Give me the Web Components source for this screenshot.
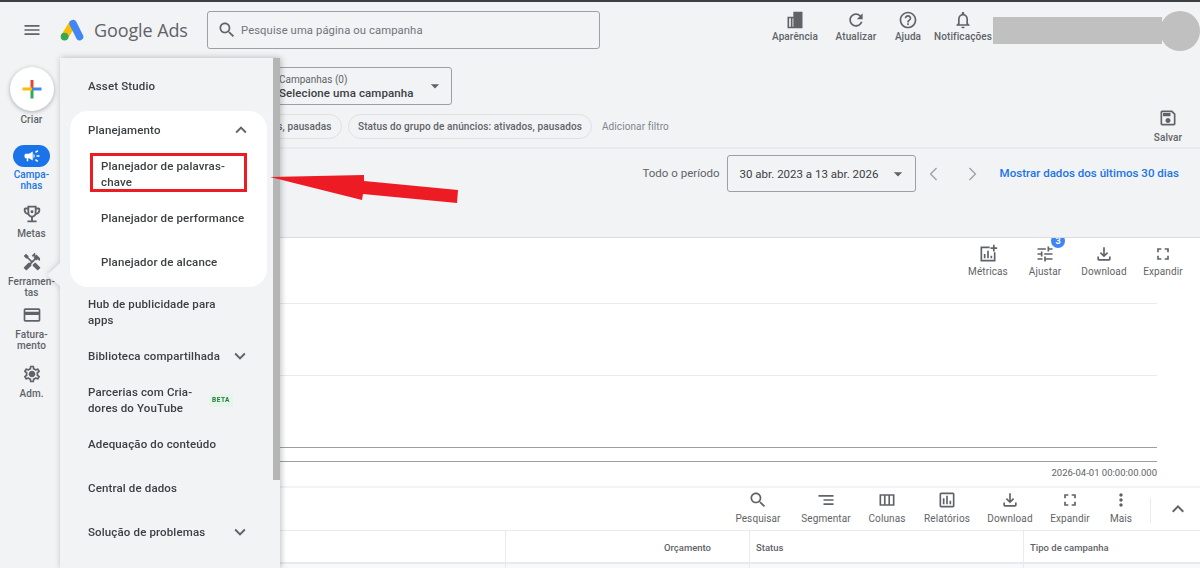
<!DOCTYPE html>
<html lang="pt-BR">
<head>
<meta charset="utf-8">
<title>Google Ads</title>
<style>
  html, body { margin: 0; height: 100%; }
  body { width: 1200px; height: 568px; overflow: hidden; background: #f1f3f5; font-family: Roboto, "Liberation Sans", sans-serif; color: #3c4043; }
</style>
</head>
<body>
<ads-app></ads-app>
<script>
const ICONS = {
  menu: '<path d="M3 18h18v-2H3v2zm0-5h18v-2H3v2zm0-7v2h18V6H3z"/>',
  search: '<path d="M15.5 14h-.79l-.28-.27C15.41 12.59 16 11.11 16 9.5 16 5.91 13.09 3 9.5 3S3 5.91 3 9.5 5.91 16 9.5 16c1.61 0 3.09-.59 4.23-1.57l.27.28v.79l5 4.99L20.49 19l-4.99-5zm-6 0C7.01 14 5 11.99 5 9.5S7.01 5 9.5 5 14 7.01 14 9.5 11.99 14 9.5 14z"/>',
  appearance: '<path fill-rule="evenodd" d="M10 2h11v20H3V8h7V2zM5 10v10h2V10H5zm4 0v10h1V10H9z"/>',
  refresh: '<path d="M17.65 6.35C16.2 4.9 14.21 4 12 4c-4.42 0-7.99 3.58-7.99 8s3.57 8 7.99 8c3.73 0 6.84-2.55 7.73-6h-2.08c-.82 2.33-3.04 4-5.65 4-3.31 0-6-2.69-6-6s2.69-6 6-6c1.66 0 3.14.69 4.22 1.78L13 11h7V4l-2.35 2.35z"/>',
  help: '<path d="M11 18h2v-2h-2v2zm1-16C6.48 2 2 6.48 2 12s4.48 10 10 10 10-4.48 10-10S17.52 2 12 2zm0 18c-4.41 0-8-3.59-8-8s3.59-8 8-8 8 3.59 8 8-3.59 8-8 8zm0-14c-2.21 0-4 1.79-4 4h2c0-1.1.9-2 2-2s2 .9 2 2c0 2-3 1.75-3 5h2c0-2.25 3-2.5 3-5 0-2.21-1.79-4-4-4z"/>',
  bell: '<path d="M12 22c1.1 0 2-.9 2-2h-4c0 1.1.9 2 2 2zm6-6v-5c0-3.07-1.63-5.64-4.5-6.32V4c0-.83-.67-1.5-1.5-1.5s-1.5.67-1.5 1.5v.68C7.64 5.36 6 7.92 6 11v5l-2 2v1h16v-1l-2-2zm-2 1H8v-6c0-2.48 1.51-4.5 4-4.5s4 2.02 4 4.5v6z"/>',
  save: '<path d="M17 3H5c-1.11 0-2 .9-2 2v14c0 1.1.89 2 2 2h14c1.1 0 2-.9 2-2V7l-4-4zm2 16H5V5h11.17L19 7.83V19zm-7-7c-1.66 0-3 1.34-3 3s1.34 3 3 3 3-1.34 3-3-1.34-3-3-3zM6 6h9v4H6z"/>',
  download: '<path d="M18 15v3H6v-3H4v3c0 1.1.9 2 2 2h12c1.1 0 2-.9 2-2v-3h-2zm-1-4l-1.41-1.41L13 12.17V4h-2v8.17L8.41 9.59 7 11l5 5 5-5z"/>',
  expand: '<path d="M7 14H5v5h5v-2H7v-3zm-2-4h2V7h3V5H5v5zm12 7h-3v2h5v-5h-2v3zM14 5v2h3v3h2V5h-5z"/>',
  tune: '<path d="M3 17v2h6v-2H3zM3 5v2h10V5H3zm10 16v-2h8v-2h-8v-2h-2v6h2zM7 9v2H3v2h4v2h2V9H7zm14 4v-2H11v2h10zm-6-4h2V7h4V5h-4V3h-2v6z"/>',
  metrics: '<path d="M14 3v2H5v14h14v-9h2v11H3V3h11zM7 12h2v5H7v-5zm4-4h2v9h-2V8zm4 6h2v3h-2v-3zM18 1h2v3h3v2h-3v3h-2V6h-3V4h3V1z"/>',
  segment: '<path d="M9 18h12v-2H9v2zM3 6v2h18V6H3zm6 7h12v-2H9v2z"/>',
  columns: '<path d="M3 5v14h18V5H3zm5.33 12H5V7h3.33v10zm5.34 0h-3.33V7h3.33v10zM19 17h-3.33V7H19v10z"/>',
  reports: '<path d="M19 3H5c-1.1 0-2 .9-2 2v14c0 1.1.9 2 2 2h14c1.1 0 2-.9 2-2V5c0-1.1-.9-2-2-2zm0 16H5V5h14v14zM7 10h2v7H7zm4-3h2v10h-2zm4 6h2v4h-2z"/>',
  more: '<path d="M12 8c1.1 0 2-.9 2-2s-.9-2-2-2-2 .9-2 2 .9 2 2 2zm0 2c-1.1 0-2 .9-2 2s.9 2 2 2 2-.9 2-2-.9-2-2-2zm0 6c-1.1 0-2 .9-2 2s.9 2 2 2 2-.9 2-2-.9-2-2-2z"/>',
  up: '<path d="M12 8l-6 6 1.41 1.41L12 10.83l4.59 4.58L18 14z"/>',
  down: '<path d="M16.59 8.59L12 13.17 7.41 8.59 6 10l6 6 6-6z"/>',
  caret: '<path d="M7 10l5 5 5-5z"/>',
  left: '<path d="M15.6 5.4L9 12l6.6 6.6-1.1 1.1L6.8 12l7.7-7.7z"/>',
  right: '<path d="M8.4 5.4L15 12l-6.6 6.6 1.1 1.1 7.7-7.7-7.7-7.7z"/>',
  campaign: '<path d="M18 11v2h4v-2h-4zm-2 6.61c.96.71 2.21 1.65 3.2 2.39.4-.53.8-1.07 1.2-1.6-.99-.74-2.24-1.68-3.2-2.4-.4.54-.8 1.08-1.2 1.61zM20.4 5.6c-.4-.53-.8-1.07-1.2-1.6-.99.74-2.24 1.68-3.2 2.4.4.53.8 1.07 1.2 1.6.96-.72 2.21-1.65 3.2-2.4zM4 9c-1.1 0-2 .9-2 2v2c0 1.1.9 2 2 2h1v4h2v-4h1l5 3V6L8 9H4zm11.5 3c0-1.33-.58-2.53-1.5-3.35v6.69c.92-.81 1.5-2.01 1.5-3.34z"/>',
  trophy: '<path d="M19 5h-2V3H7v2H5c-1.1 0-2 .9-2 2v1c0 2.55 1.92 4.63 4.39 4.94.63 1.5 1.98 2.63 3.61 2.96V19H7v2h10v-2h-4v-3.1c1.63-.33 2.98-1.46 3.61-2.96C19.08 12.63 21 10.55 21 8V7c0-1.1-.9-2-2-2zM5 8V7h2v3.82C5.84 10.4 5 9.3 5 8zm7 6c-1.65 0-3-1.35-3-3V5h6v6c0 1.65-1.35 3-3 3zm7-6c0 1.3-.84 2.4-2 2.82V7h2v1z"/><circle cx="12" cy="9.5" r="1.6"/>',
  tools: '<path d="M21.67 18.17l-5.3-5.3h-.99l-2.54 2.54v.99l5.3 5.3c.39.39 1.02.39 1.41 0l2.12-2.12c.39-.38.39-1.02 0-1.41zM17.34 10.19l1.41-1.41 2.12 2.12c1.17-1.17 1.17-3.07 0-4.24l-3.54-3.54-1.41 1.41V1.71l-.7-.71-3.54 3.54.71.71h2.83l-1.41 1.41 1.06 1.06-2.89 2.89-4.13-4.13V5.06L4.83 2.04 2 4.87 5.03 7.9h1.41l4.13 4.13-.85.85H7.71l-5.3 5.3c-.39.39-.39 1.02 0 1.41l2.12 2.12c.39.39 1.02.39 1.41 0l5.3-5.3v-2.01l5.15-5.15 1.06 1.06z"/>',
  card: '<path d="M20 4H4c-1.11 0-1.99.89-1.99 2L2 18c0 1.11.89 2 2 2h16c1.11 0 2-.89 2-2V6c0-1.11-.89-2-2-2zm0 14H4v-6h16v6zm0-10H4V6h16v2z"/>',
  settings: '<path d="M19.43 12.98c.04-.32.07-.64.07-.98 0-.34-.03-.66-.07-.98l2.11-1.65c.19-.15.24-.42.12-.64l-2-3.46c-.09-.16-.26-.25-.44-.25-.06 0-.12.01-.17.03l-2.49 1c-.52-.4-1.08-.73-1.69-.98l-.38-2.65C14.46 2.18 14.25 2 14 2h-4c-.25 0-.46.18-.49.42l-.38 2.65c-.61.25-1.17.59-1.69.98l-2.49-1c-.06-.02-.12-.03-.18-.03-.17 0-.34.09-.43.25l-2 3.46c-.13.22-.07.49.12.64l2.11 1.65c-.04.32-.07.65-.07.98 0 .33.03.66.07.98l-2.11 1.65c-.19.15-.24.42-.12.64l2 3.46c.09.16.26.25.44.25.06 0 .12-.01.17-.03l2.49-1c.52.4 1.08.73 1.69.98l.38 2.65c.03.24.24.42.49.42h4c.25 0 .46-.18.49-.42l.38-2.65c.61-.25 1.17-.59 1.69-.98l2.49 1c.06.02.12.03.18.03.17 0 .34-.09.43-.25l2-3.46c.12-.22.07-.49-.12-.64l-2.11-1.65zm-1.98-1.71c.04.31.05.52.05.73 0 .21-.02.43-.05.73l-.14 1.13.89.7 1.08.84-.7 1.21-1.27-.51-1.04-.42-.9.68c-.43.32-.84.56-1.25.73l-1.06.43-.16 1.13-.2 1.35h-1.4l-.19-1.35-.16-1.13-1.06-.43c-.43-.18-.83-.41-1.23-.71l-.91-.7-1.06.43-1.27.51-.7-1.21 1.08-.84.89-.7-.14-1.13c-.03-.31-.05-.54-.05-.74s.02-.43.05-.73l.14-1.13-.89-.7-1.08-.84.7-1.21 1.27.51 1.04.42.9-.68c.43-.32.84-.56 1.25-.73l1.06-.43.16-1.13.2-1.35h1.39l.19 1.35.16 1.13 1.06.43c.43.18.83.41 1.23.71l.91.7 1.06-.43 1.27-.51.7 1.21-1.07.85-.89.7.14 1.13zM12 8c-2.21 0-4 1.79-4 4s1.79 4 4 4 4-1.79 4-4-1.79-4-4-4z"/>'
};

class AdsIcon extends HTMLElement {
  connectedCallback() {
    const size = this.getAttribute('size') || 24;
    const name = this.getAttribute('name');
    const root = this.shadowRoot || this.attachShadow({ mode: 'open' });
    root.innerHTML = `<style>
      :host { display: block; width: ${size}px; height: ${size}px; color: var(--icon-color, #5f6368); flex: none; }
      svg { display: block; width: 100%; height: 100%; fill: currentColor; }
    </style><svg viewBox="0 0 24 24">${ICONS[name] || ''}</svg>`;
  }
}
customElements.define('ads-icon', AdsIcon);

// icon with a small caption under it, used by all the toolbars
class AdsTool extends HTMLElement {
  connectedCallback() {
    const root = this.attachShadow({ mode: 'open' });
    const width = this.getAttribute('width');
    root.innerHTML = `<style>
      :host { display: flex; flex-direction: column; align-items: center; width: ${width}px; flex: none; position: relative; }
      .label { font-size: var(--tool-font, 10px); font-weight: var(--tool-weight, 500); letter-spacing: .1px; line-height: 12px; margin-top: var(--tool-gap, 2px); color: var(--tool-color, #5f6368); white-space: nowrap; }
      .badge { position: absolute; top: -10px; left: 50%; margin-left: 6px; width: 14px; height: 14px; border-radius: 50%; background: #4285f4; color: #fff; font-size: 9px; font-weight: 700; line-height: 15px; text-align: center; }
    </style>
    <ads-icon name="${this.getAttribute('icon')}" size="${this.getAttribute('size') || 20}"></ads-icon>
    <div class="label"><slot></slot></div>
    ${this.hasAttribute('badge') ? `<div class="badge">${this.getAttribute('badge')}</div>` : ''}`;
  }
}
customElements.define('ads-tool', AdsTool);

class AdsTopbar extends HTMLElement {
  constructor() {
    super();
    this.attachShadow({ mode: 'open' }).innerHTML = `<style>
      :host { display: flex; align-items: center; height: 56px; border-top: 2px solid #3c4043; box-sizing: content-box; }
      .burger { margin-left: 22px; }
      .logo { display: block; width: 24px; height: 22px; margin-left: 18px; }
      .name { margin-left: 10px; width: 113px; font-family: "Open Sans", Roboto, sans-serif; font-size: 18px; color: #5f6368; letter-spacing: -.1px; white-space: nowrap; }
      .search { display: flex; align-items: center; width: 393px; height: 38px; box-sizing: border-box; border: 1px solid #9aa0a6; border-radius: 3px; padding-left: 9px; font-size: 11.25px; letter-spacing: .1px; color: #70757a; }
      .search span { margin-left: 4px; }
      .tools { display: flex; margin-left: 161px; margin-top: -8px; --tool-gap: 1px; --tool-font: 10px; }
      .blank { width: 169px; height: 27px; background: #c0c0c0; margin-top: 1px; }
      .avatar { width: 40px; height: 40px; border-radius: 50%; background: #c0c0c0; margin-left: -2px; margin-top: 1px; }
    </style>
    <ads-icon class="burger" name="menu" size="20"></ads-icon>
    <svg class="logo" viewBox="0 0 24 22">
      <path d="M13 4 5 17" stroke="#fbbc04" stroke-width="7.4" fill="none"/>
      <path d="M13 4.5 19.6 17.6" stroke="#4285f4" stroke-width="7.4" stroke-linecap="round" fill="none"/>
      <circle cx="4.6" cy="17.6" r="3.9" fill="#34a853"/>
    </svg>
    <div class="name">Google Ads</div>
    <div class="search"><ads-icon name="search" size="20"></ads-icon><span>Pesquise uma página ou campanha</span></div>
    <div class="tools">
      <ads-tool icon="appearance" width="68">Aparência</ads-tool>
      <ads-tool icon="refresh" width="54">Atualizar</ads-tool>
      <ads-tool icon="help" width="50">Ajuda</ads-tool>
      <ads-tool icon="bell" width="60">Notificações</ads-tool>
    </div>
    <div class="blank"></div>
    <div class="avatar"></div>`;
  }
}
customElements.define('ads-topbar', AdsTopbar);

class AdsRailItem extends HTMLElement {
  connectedCallback() {
    const active = this.hasAttribute('active');
    const size = active ? 18 : (this.getAttribute('size') || 20);
    this.attachShadow({ mode: 'open' }).innerHTML = `<style>
      :host { display: flex; flex-direction: column; align-items: center; width: 63px; }
      .pill { display: flex; justify-content: center; align-items: center; width: ${active ? 37 : 24}px; height: ${active ? 22 : 24}px; border-radius: 11px; background: ${active ? '#1a73e8' : 'none'}; --icon-color: ${active ? '#fff' : '#5f6368'}; }
      .label { margin-top: 2px; font-size: 10px; font-weight: 500; line-height: 11px; letter-spacing: .1px; text-align: center; white-space: nowrap; color: ${active ? '#1a73e8' : '#5f6368'}; }
    </style>
    <div class="pill"><ads-icon name="${this.getAttribute('icon')}" size="${size}"></ads-icon></div>
    <div class="label"><slot></slot></div>`;
  }
}
customElements.define('ads-rail-item', AdsRailItem);

class AdsRail extends HTMLElement {
  constructor() {
    super();
    this.attachShadow({ mode: 'open' }).innerHTML = `<style>
      :host { display: flex; flex-direction: column; align-items: center; width: 63px; height: 510px; padding-top: 9px; box-sizing: border-box; position: relative; z-index: 3; margin-right: -3px; }
      .create { width: 44px; height: 44px; border-radius: 50%; background: #fff; box-shadow: 0 1px 4px rgba(60,64,67,.4); display: block; }
      .create-label { margin: 2.5px 0 20px; font-size: 10px; font-weight: 500; line-height: 11px; letter-spacing: .1px; color: #5f6368; }
    </style>
    <svg class="create" viewBox="0 0 44 44">
      <path d="M22 21V13" stroke="#ea4335" stroke-width="3"/>
      <path d="M22 20.5h9.5" stroke="#4285f4" stroke-width="3" transform="translate(0 1.5)"/>
      <path d="M22 22v9.5" stroke="#34a853" stroke-width="3"/>
      <path d="M12.5 22H22" stroke="#fbbc04" stroke-width="3"/>
    </svg>
    <div class="create-label">Criar</div>
    <ads-rail-item icon="campaign" active style="margin-bottom:11px">Campa-<br>nhas</ads-rail-item>
    <ads-rail-item icon="trophy" size="22" style="margin-bottom:11.5px">Metas</ads-rail-item>
    <ads-rail-item icon="tools" style="margin-bottom:5px">Ferramen-<br>tas</ads-rail-item>
    <ads-rail-item icon="card" style="margin-bottom:11px">Fatura-<br>mento</ads-rail-item>
    <ads-rail-item icon="settings">Adm.</ads-rail-item>`;
  }
}
customElements.define('ads-rail', AdsRail);

class AdsNavRow extends HTMLElement {
  connectedCallback() {
    const chev = this.getAttribute('chevron');
    const beta = this.hasAttribute('beta');
    this.attachShadow({ mode: 'open' }).innerHTML = `<style>
      :host { display: flex; align-items: center; height: 44px; padding-left: 28px; padding-right: 28px; box-sizing: border-box; font-size: 11.5px; font-weight: 500; line-height: 16px; letter-spacing: .14px; color: #3c4043; }
      :host([sub]) { padding-left: 31px; padding-right: 8px; }
      :host([head]) { height: 38px; margin-bottom: 3px; padding-left: 18px; padding-right: 15px; }
      .text { flex: 1; white-space: nowrap; }
      .beta { margin-right: 19px; width: 24px; height: 13px; background: #e6f4ea; border-radius: 3px; color: #188038; font-size: 6.5px; font-weight: 700; line-height: 13px; letter-spacing: .5px; text-align: center; }
    </style>
    <div class="text"><slot></slot></div>
    ${beta ? '<div class="beta">BETA</div>' : ''}
    ${chev ? `<ads-icon name="${chev}" size="22"></ads-icon>` : ''}`;
  }
}
customElements.define('ads-nav-row', AdsNavRow);

class AdsNavGroup extends HTMLElement {
  constructor() {
    super();
    this.attachShadow({ mode: 'open' }).innerHTML = `<style>
      :host { display: block; margin: 3px 13px 3px 10px; padding-bottom: 3px; background: #fff; border-radius: 18px; }
    </style><slot></slot>`;
  }
}
customElements.define('ads-nav-group', AdsNavGroup);

class AdsFlyout extends HTMLElement {
  constructor() {
    super();
    this.attachShadow({ mode: 'open' }).innerHTML = `<style>
      :host { display: block; position: absolute; left: 60px; top: 58px; bottom: 0; width: 220px; z-index: 2; filter: drop-shadow(1px 0 3px rgba(60,64,67,.35)); }
      .panel { height: 100%; box-sizing: border-box; padding-top: 6px; background: #f1f3f5; overflow: hidden; }
      .notch { position: absolute; left: -13px; top: 204px; width: 14px; height: 25px; background: #f1f3f5; clip-path: polygon(100% 0, 0 52%, 100% 100%); }
      .thumb { position: absolute; right: 0; top: 0; width: 7px; height: 422px; background: #b5b5b5; }
    </style>
    <div class="notch"></div>
    <div class="panel"><slot></slot></div>
    <div class="thumb"></div>`;
  }
}
customElements.define('ads-flyout', AdsFlyout);

class AdsFilters extends HTMLElement {
  constructor() {
    super();
    this.attachShadow({ mode: 'open' }).innerHTML = `<style>
      :host { display: block; height: 91px; box-sizing: border-box; padding: 9px 0 0 208px; border-bottom: 2px solid #e8eaed; position: relative; }
      .select { display: flex; align-items: center; width: 184px; height: 38px; box-sizing: border-box; padding: 0 6px 0 10px; border: 1px solid #9aa0a6; border-radius: 3px; }
      .select .t { flex: 1; }
      .small { font-size: 10px; line-height: 13px; color: #5f6368; letter-spacing: 0; }
      .value { font-size: 11.5px; line-height: 14px; font-weight: 500; color: #3c4043; letter-spacing: .1px; white-space: nowrap; }
      .chips { display: flex; align-items: center; margin-top: 9px; font-size: 10px; font-weight: 500; letter-spacing: .1px; color: #5f6368; height: 25px; }
      .chip { height: 25px; box-sizing: border-box; border: 1px solid #dfe1e5; border-radius: 13px; padding: 0 9.5px; display: flex; align-items: center; white-space: nowrap; }
      .first { width: 80px; justify-content: flex-end; margin-left: -6px; margin-right: 5.5px; }
      .add { margin-left: 9.5px; font-weight: 400; color: #80868b; letter-spacing: .1px; }
      .save { position: absolute; right: 8px; top: 50px; --tool-font: 10px; --tool-gap: 4px; }
    </style>
    <div class="select">
      <div class="t"><div class="small">Campanhas (0)</div><div class="value">Selecione uma campanha</div></div>
      <ads-icon name="caret" size="20"></ads-icon>
    </div>
    <div class="chips">
      <div class="chip first">s, pausadas</div>
      <div class="chip">Status do grupo de anúncios: ativados, pausados</div>
      <div class="add">Adicionar filtro</div>
    </div>
    <ads-tool class="save" icon="save" width="48">Salvar</ads-tool>`;
  }
}
customElements.define('ads-filters', AdsFilters);

class AdsDateRow extends HTMLElement {
  constructor() {
    super();
    this.attachShadow({ mode: 'open' }).innerHTML = `<style>
      :host { display: flex; align-items: flex-start; justify-content: flex-end; height: 88px; box-sizing: border-box; padding: 6px 21px 0 0; font-size: 11.5px; letter-spacing: 0; color: #5f6368; }
      .period { margin: 0 7px 0 0; line-height: 37px; }
      .box { display: flex; align-items: center; width: 189px; height: 37px; box-sizing: border-box; padding: 0 7px 0 12px; border: 1px solid #9aa0a6; border-radius: 3px; color: #3c4043; }
      .box span { flex: 1; }
      .nav { display: flex; align-items: center; height: 37px; margin-left: 8px; --icon-color: #9aa0a6; }
      .nav ads-icon + ads-icon { margin-left: 18px; }
      .link { margin-left: 18px; line-height: 37px; font-weight: 500; color: #1a73e8; white-space: nowrap; letter-spacing: .03px; }
    </style>
    <div class="period">Todo o período</div>
    <div class="box"><span>30 abr. 2023 a 13 abr. 2026</span><ads-icon name="caret" size="20"></ads-icon></div>
    <div class="nav"><ads-icon name="left" size="20"></ads-icon><ads-icon name="right" size="20"></ads-icon></div>
    <div class="link">Mostrar dados dos últimos 30 dias</div>`;
  }
}
customElements.define('ads-date-row', AdsDateRow);

class AdsChart extends HTMLElement {
  constructor() {
    super();
    this.attachShadow({ mode: 'open' }).innerHTML = `<style>
      :host { display: block; height: 248px; box-sizing: content-box; background: #fff; border-top: 1px solid #dadce0; overflow: hidden; }
      .tools { display: flex; justify-content: flex-end; height: 65px; box-sizing: border-box; padding: 6px 7px 0 0; --tool-gap: 2px; --tool-font: 10px; --tool-weight: 400; }
      .plot { margin-right: 43px; }
      .line { height: 1px; background: #e8eaed; }
      .gap { height: 71px; }
      .axis { background: #9aa0a6; }
      .short { height: 13px; }
      .stamp { margin-top: 5px; text-align: right; font-size: 9.5px; line-height: 12px; letter-spacing: 0; color: #5f6368; }
    </style>
    <div class="tools">
      <ads-tool icon="metrics" width="54">Métricas</ads-tool>
      <ads-tool icon="tune" width="60" badge="3">Ajustar</ads-tool>
      <ads-tool icon="download" width="58">Download</ads-tool>
      <ads-tool icon="expand" width="60">Expandir</ads-tool>
    </div>
    <div class="plot">
      <div class="line"></div><div class="gap"></div>
      <div class="line"></div><div class="gap"></div>
      <div class="line axis"></div><div class="short"></div>
      <div class="line axis"></div>
      <div class="stamp">2026-04-01 00:00:00.000</div>
    </div>`;
  }
}
customElements.define('ads-chart', AdsChart);

class AdsTable extends HTMLElement {
  constructor() {
    super();
    this.attachShadow({ mode: 'open' }).innerHTML = `<style>
      :host { display: block; background: #fff; border-top: 2px solid #f1f3f5; }
      .tools { display: flex; justify-content: flex-end; align-items: flex-start; height: 42px; box-sizing: border-box; padding-top: 2px; --tool-gap: 3px; --tool-font: 10px; --tool-weight: 400; }
      .div { width: 1px; height: 25px; margin: 8px 0 0 8px; background: #e8eaed; }
      .collapse { margin: 7px 10px 0 15px; }
      .head, .row { display: grid; grid-template-columns: 445px 244px 274px 177px; }
      .head { height: 31px; border-top: 1px solid #e8eaed; border-bottom: 2px solid #e8eaed; box-sizing: content-box; font-size: 9.5px; font-weight: 500; letter-spacing: 0; color: #5f6368; }
      .head div, .row div { border-left: 1px solid #e8eaed; line-height: 33px; padding: 0 6px; box-sizing: border-box; }
      .head div:first-child, .row div:first-child { border-left: 0; }
      .num { text-align: right; padding-right: 38px !important; }
      .row { height: 20px; background: #f8f9fa; }
    </style>
    <div class="tools">
      <ads-tool icon="search" width="68">Pesquisar</ads-tool>
      <ads-tool icon="segment" width="68">Segmentar</ads-tool>
      <ads-tool icon="columns" width="54">Colunas</ads-tool>
      <ads-tool icon="reports" width="66">Relatórios</ads-tool>
      <ads-tool icon="download" width="60">Download</ads-tool>
      <ads-tool icon="expand" width="60">Expandir</ads-tool>
      <ads-tool icon="more" width="42">Mais</ads-tool>
      <div class="div"></div>
      <ads-icon class="collapse" name="up" size="24"></ads-icon>
    </div>
    <div class="head"><div></div><div class="num">Orçamento</div><div>Status</div><div>Tipo de campanha</div></div>
    <div class="row"><div></div><div></div><div></div><div></div></div>`;
  }
}
customElements.define('ads-table', AdsTable);

// the red box and the arrow somebody drew on top of the screenshot
class AdsMarkup extends HTMLElement {
  constructor() {
    super();
    this.attachShadow({ mode: 'open' }).innerHTML = `<style>
      :host { position: absolute; left: 0; top: 0; width: 1200px; height: 568px; z-index: 5; pointer-events: none; }
      svg { display: block; }
    </style>
    <svg width="1200" height="568" viewBox="0 0 1200 568">
      <rect x="91.5" y="154.5" width="154" height="36" fill="none" stroke="#ed1c24" stroke-width="3"/>
      <path d="M270 177 364 175 364 181 458 190 457 203 363 194 362 200z" fill="#ed1c24"/>
    </svg>`;
  }
}
customElements.define('ads-markup', AdsMarkup);

class AdsApp extends HTMLElement {
  constructor() {
    super();
    this.attachShadow({ mode: 'open' }).innerHTML = `<style>
      :host { display: block; position: relative; width: 1200px; height: 568px; overflow: hidden; }
      .body { display: flex; align-items: flex-start; }
      main { flex: 1; min-width: 0; }
    </style>
    <ads-topbar></ads-topbar>
    <div class="body">
      <ads-rail></ads-rail>
      <main>
        <ads-filters></ads-filters>
        <ads-date-row></ads-date-row>
        <ads-chart></ads-chart>
        <ads-table></ads-table>
      </main>
    </div>
    <ads-flyout>
      <ads-nav-row>Asset Studio</ads-nav-row>
      <ads-nav-group>
        <ads-nav-row head chevron="up">Planejamento</ads-nav-row>
        <ads-nav-row sub>Planejador de palavras-<br>chave</ads-nav-row>
        <ads-nav-row sub>Planejador de performance</ads-nav-row>
        <ads-nav-row sub>Planejador de alcance</ads-nav-row>
      </ads-nav-group>
      <ads-nav-row>Hub de publicidade para<br>apps</ads-nav-row>
      <ads-nav-row chevron="down" style="padding-right:29px">Biblioteca compartilhada</ads-nav-row>
      <ads-nav-row beta>Parcerias com Cria-<br>dores do YouTube</ads-nav-row>
      <ads-nav-row>Adequação do conteúdo</ads-nav-row>
      <ads-nav-row>Central de dados</ads-nav-row>
      <ads-nav-row chevron="down" style="padding-right:29px">Solução de problemas</ads-nav-row>
    </ads-flyout>
    <ads-markup></ads-markup>`;
  }
}
customElements.define('ads-app', AdsApp);
</script>
</body>
</html>
